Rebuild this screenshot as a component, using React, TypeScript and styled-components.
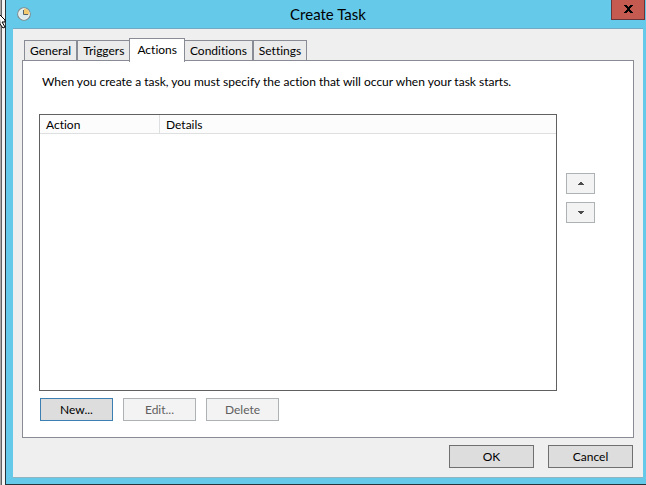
import React, { useState } from "react";
import styled, { createGlobalStyle } from "styled-components";

const GlobalStyle = createGlobalStyle`
  *, *::before, *::after { box-sizing: border-box; }
  body {
    margin: 0;
    overflow: hidden;
    font-family: Lato, "Open Sans", sans-serif;
    font-size: 12px;
    line-height: 16px;
    font-variant-ligatures: none;
    color: #000;
  }
  button { font: inherit; font-variant-ligatures: none; color: inherit; padding: 0; margin: 0; }
`;

const Desktop = styled.div`
  position: relative;
  display: flex;
  min-height: 100vh;
  background: #f4f4f4;
`;

const BackWindowEdge = styled.div`
  flex: none;
  width: 5px;
  background: #f4f4f4;
  border-left: 1px solid #a8a8a8;
  box-shadow: inset 1px 0 0 #606060;
`;

const Pointer = styled.svg`
  position: absolute;
  left: 0;
  top: 12px;
`;

const Dialog = styled.main`
  flex: 1;
  min-width: 0;
  display: flex;
  flex-direction: column;
  padding: 0 3px 6px 7px;
  background: #65caea;
  border-left: 1px solid #26343a;
  border-bottom: 1px solid #26343a;
`;

const TitleBar = styled.header`
  display: grid;
  grid-template-columns: 32px 1fr 32px;
  align-items: start;
  height: 28px;
`;

const TitleIcon = styled.svg`
  display: block;
  margin: 7px 0 0 4px;
`;

const Title = styled.h1`
  margin: 0;
  text-align: center;
  font-size: 15px;
  font-weight: 400;
  line-height: 28px;
`;

const CloseButton = styled.button`
  display: flex;
  align-items: center;
  justify-content: center;
  width: 34px;
  height: 20px;
  padding-bottom: 2px;
  background: #c45a50;
  border: 1px solid #69343a;
  border-top: 0;
`;

const Body = styled.div`
  flex: 1;
  display: flex;
  flex-direction: column;
  padding: 9px;
  background: #efefef;
  border-top: 1px solid #74a9c6;
  border-bottom: 1px solid #8fb4c2;
`;

const TabList = styled.div`
  display: flex;
  align-items: flex-end;
  height: 22px;
  padding-left: 2px;
`;

const Tab = styled.button<{ $active: boolean }>`
  position: relative;
  height: ${(p) => (p.$active ? 24 : 20)}px;
  padding: ${(p) => (p.$active ? "0 7px 2px" : "0 5px")};
  margin: ${(p) => (p.$active ? "0 -1px -2px -1px" : "0")};
  z-index: ${(p) => (p.$active ? 1 : 0)};
  background: ${(p) => (p.$active ? "#fff" : "#ebebeb")};
  border: 1px solid #898b95;
  border-bottom: 0;
`;

const Panel = styled.section`
  flex: 1;
  display: flex;
  flex-direction: column;
  padding: 13px 16px 16px;
  background: #fff;
  border: 1px solid #898b95;
`;

const Intro = styled.p`
  margin: 0 0 24px 3px;
`;

const ListRow = styled.div`
  flex: 1;
  display: flex;
  gap: 9px;
`;

const ListBox = styled.div`
  flex: 1;
  border: 1px solid #606060;
`;

const ActionTable = styled.table`
  width: 100%;
  table-layout: fixed;
  border-collapse: separate;
  border-spacing: 0;
`;

const HeadCell = styled.th<{ $narrow?: boolean }>`
  width: ${(p) => (p.$narrow ? "120px" : "auto")};
  height: 19px;
  padding: 2px 6px 0;
  text-align: left;
  font-weight: 400;
  background: #fcfcfc;
  border-bottom: 1px solid #dedfe1;
  border-right: ${(p) => (p.$narrow ? "1px solid #dedfe1" : "0")};
`;

const OrderButtons = styled.div`
  display: flex;
  flex-direction: column;
  gap: 8px;
  width: 51px;
  padding-top: 59px;
`;

const OrderButton = styled.button`
  display: flex;
  align-items: center;
  justify-content: center;
  width: 29px;
  height: 21px;
  background: #f3f3f3;
  border: 1px solid #adb2b5;
`;

const ListButtons = styled.div`
  display: flex;
  gap: 10px;
  padding: 7px 0 0 1px;
`;

const PushButton = styled.button<{ $wide?: boolean; $focused?: boolean }>`
  width: ${(p) => (p.$wide ? 85 : 73)}px;
  height: 23px;
  background: #dddddd;
  border: 1px solid ${(p) => (p.$focused ? "#3c7fb1" : "#707070")};
  &:disabled {
    color: #606060;
    background: #f3f3f3;
    border-color: #adb2b5;
  }
`;

const Footer = styled.footer`
  display: flex;
  justify-content: flex-end;
  gap: 14px;
  padding: 7px 1px 0 0;
`;

const tabs = ["General", "Triggers", "Actions", "Conditions", "Settings"];

export default function App() {
  const [active, setActive] = useState("Actions");
  return (
    <>
      <GlobalStyle />
      <Desktop>
        <BackWindowEdge />
        <Dialog>
          <TitleBar>
            <TitleIcon width="14" height="14" viewBox="0 0 14 14" aria-hidden="true">
              <circle cx="7" cy="7" r="6.3" fill="#dce9ee" stroke="#7c8688" strokeWidth="1.1" />
              <circle cx="7" cy="7" r="5.3" fill="none" stroke="#f4f6f2" strokeWidth="0.7" />
              <path d="M7 7.5V1.6a5.4 5.4 0 0 1 5.4 5.9Z" fill="#f2c970" />
              <path d="M6.5 3v4.5H11" fill="none" stroke="#53636c" strokeWidth="1" />
            </TitleIcon>
            <Title>Create Task</Title>
            <CloseButton aria-label="Close">
              <svg width="9" height="8" viewBox="0 0 9 8" shapeRendering="crispEdges" aria-hidden="true">
                <path
                  d="M0 0h3v1h1v1h1V1h1V0h3v1H8v1H7v1H6v2h1v1h1v1h1v1H6V7H5V6H4v1H3v1H0V7h1V6h1V5h1V3H2V2H1V1H0Z"
                  fill="#000"
                />
              </svg>
            </CloseButton>
          </TitleBar>
          <Body>
            <TabList role="tablist">
              {tabs.map((name) => (
                <Tab
                  key={name}
                  role="tab"
                  aria-selected={name === active}
                  $active={name === active}
                  onClick={() => setActive(name)}
                >
                  {name}
                </Tab>
              ))}
            </TabList>
            <Panel role="tabpanel" aria-label={active}>
              <Intro>
                When you create a task, you must specify the action that will occur when your task starts.
              </Intro>
              <ListRow>
                <ListBox>
                  <ActionTable>
                    <thead>
                      <tr>
                        <HeadCell $narrow>Action</HeadCell>
                        <HeadCell>Details</HeadCell>
                      </tr>
                    </thead>
                  </ActionTable>
                </ListBox>
                <OrderButtons>
                  <OrderButton aria-label="Move up">
                    <svg width="6" height="3" viewBox="0 0 6 3" shapeRendering="crispEdges" aria-hidden="true">
                      <path d="M2 0h2v1h1v1h1v1H0V2h1V1h1Z" fill="#4c4c4c" />
                    </svg>
                  </OrderButton>
                  <OrderButton aria-label="Move down">
                    <svg width="6" height="3" viewBox="0 0 6 3" shapeRendering="crispEdges" aria-hidden="true">
                      <path d="M0 0h6v1H5v1H4v1H2V2H1V1H0Z" fill="#4c4c4c" />
                    </svg>
                  </OrderButton>
                </OrderButtons>
              </ListRow>
              <ListButtons>
                <PushButton $focused>New...</PushButton>
                <PushButton disabled>Edit...</PushButton>
                <PushButton disabled>Delete</PushButton>
              </ListButtons>
            </Panel>
            <Footer>
              <PushButton $wide>OK</PushButton>
              <PushButton $wide>Cancel</PushButton>
            </Footer>
          </Body>
        </Dialog>
        <Pointer width="6" height="18" viewBox="0 0 6 18" aria-hidden="true">
          <path d="M-1 2l6 6v2H2l3 5-2 1-3-4Z" fill="#fff" stroke="#000" strokeWidth="1" />
        </Pointer>
      </Desktop>
    </>
  );
}
